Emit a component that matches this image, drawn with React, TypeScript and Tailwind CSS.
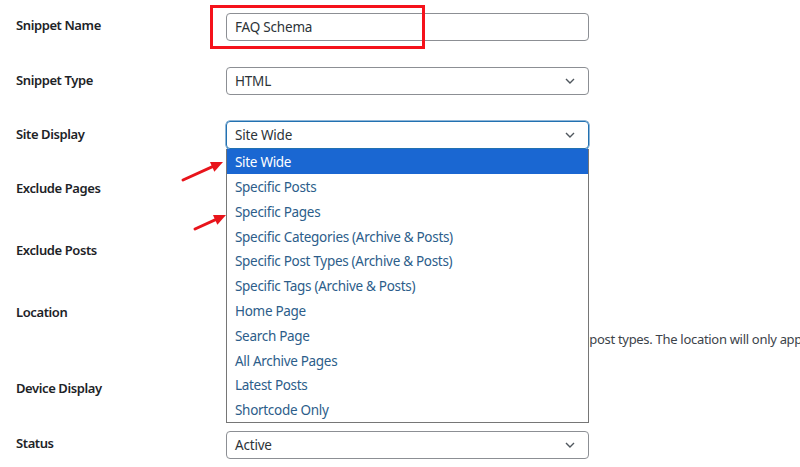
const options = [
  "Site Wide",
  "Specific Posts",
  "Specific Pages",
  "Specific Categories (Archive & Posts)",
  "Specific Post Types (Archive & Posts)",
  "Specific Tags (Archive & Posts)",
  "Home Page",
  "Search Page",
  "All Archive Pages",
  "Latest Posts",
  "Shortcode Only",
];

function Chevron() {
  return (
    <svg width="10" height="6" viewBox="0 0 10 6" className="text-[#50575e]">
      <path d="M1 1l4 4 4-4" fill="none" stroke="currentColor" strokeWidth="1.4" />
    </svg>
  );
}

function Select({ value, focused }: { value?: string; focused?: boolean }) {
  return (
    <div
      className={
        focused
          ? "flex h-[28px] w-[363px] items-center justify-between rounded-[4px] border border-[#2271b1] pl-2 pr-[13px] text-[13.5px] tracking-[-0.2px] text-[#2c3338] shadow-[0_0_0_0.5px_#2271b1]"
          : "flex h-[28px] w-[363px] items-center justify-between rounded-[4px] border border-[#8c8f94] pl-2 pr-[13px] text-[13.5px] tracking-[-0.2px] text-[#2c3338]"
      }
    >
      <span>{value}</span>
      <Chevron />
    </div>
  );
}

function Arrow({ x1, y1, x2, y2 }: { x1: number; y1: number; x2: number; y2: number }) {
  const a = Math.atan2(y2 - y1, x2 - x1);
  const l = 13;
  const w = 0.42;
  const p1 = `${x2 - l * Math.cos(a - w)},${y2 - l * Math.sin(a - w)}`;
  const p2 = `${x2 - l * Math.cos(a + w)},${y2 - l * Math.sin(a + w)}`;
  return (
    <g>
      <line x1={x1} y1={y1} x2={x2 - 6 * Math.cos(a)} y2={y2 - 6 * Math.sin(a)} stroke="#e8141b" strokeWidth="3" strokeLinecap="round" />
      <polygon points={`${x2},${y2} ${p1} ${p2}`} fill="#e8141b" />
    </g>
  );
}

export default function App() {
  return (
    <div className="relative h-[467px] w-[800px] overflow-hidden bg-white font-['Noto_Sans',sans-serif] text-[13px] text-[#1d2327]">
      <div className="flex h-[54px]">
        <div className="w-[226px] pl-4 pt-[15px] font-semibold leading-5 tracking-[-0.4px]">Snippet Name</div>
        <div className="pt-[13px]">
          <div className="flex h-[28px] w-[363px] items-center rounded-[4px] border border-[#8c8f94] px-2 text-[13.5px] tracking-[-0.2px] text-[#2c3338]">
            FAQ Schema
          </div>
        </div>
      </div>

      <div className="flex h-[54px]">
        <div className="w-[226px] pl-4 pt-[16px] font-semibold leading-5 tracking-[-0.4px]">Snippet Type</div>
        <div className="pt-[13px]">
          <Select value="HTML" />
        </div>
      </div>

      <div className="flex h-[54px]">
        <div className="w-[226px] pl-4 pt-[16px] font-semibold leading-5 tracking-[-0.4px]">Site Display</div>
        <div className="relative z-10 pt-[13px]">
          <Select value="Site Wide" focused />
          <ul className="absolute left-0 top-[41px] w-[363px] border border-t-0 border-[#767676] bg-white text-[13.5px] tracking-[-0.3px]">
            {options.map((o, i) => (
              <li
                key={o}
                className={
                  i === 0
                    ? "flex h-[24.8px] items-center bg-[#1a67d2] px-2 pt-[2px] text-white"
                    : "flex h-[24.8px] items-center px-2 pt-[2px] text-[#2c5d8a]"
                }
              >
                {o}
              </li>
            ))}
          </ul>
        </div>
      </div>

      <div className="flex h-[62px]">
        <div className="w-[226px] pl-4 pt-[16px] font-semibold leading-5 tracking-[-0.4px]">Exclude Pages</div>
      </div>

      <div className="flex h-[62px]">
        <div className="w-[226px] pl-4 pt-[16px] font-semibold leading-5 tracking-[-0.4px]">Exclude Posts</div>
      </div>

      <div className="flex h-[76px]">
        <div className="w-[226px] shrink-0 pl-4 pt-[16px] font-semibold leading-5 tracking-[-0.4px]">Location</div>
        <div className="pt-[13px]">
          <Select />
          <p className="mt-[2px] whitespace-nowrap leading-5 tracking-[-0.3px] text-[#3c434a]">
            Determine where your snippet should get inserted for specific post types. The location will only appear for the selected pages.
          </p>
        </div>
      </div>

      <div className="flex h-[55px]">
        <div className="w-[226px] pl-4 pt-[16px] font-semibold leading-5 tracking-[-0.4px]">Device Display</div>
      </div>

      <div className="flex h-[45px]">
        <div className="w-[226px] pl-4 pt-[16px] font-semibold leading-5 tracking-[-0.4px]">Status</div>
        <div className="pt-[14px]">
          <Select value="Active" />
        </div>
      </div>

      <div className="pointer-events-none absolute left-[210px] top-[5px] h-[44px] w-[215px] border-[3px] border-[#f5121b]" />

      <svg className="pointer-events-none absolute left-0 top-0 z-20" width="800" height="467">
        <Arrow x1={183} y1={180} x2={223} y2={162} />
        <Arrow x1={195} y1={229} x2={226} y2={215} />
      </svg>
    </div>
  );
}
